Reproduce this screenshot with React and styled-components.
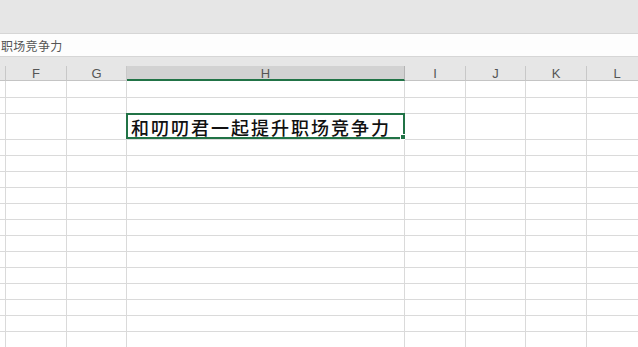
import styled, { createGlobalStyle } from 'styled-components';

const GlobalStyle = createGlobalStyle`
  html, body {
    margin: 0;
    padding: 0;
    background: #ffffff;
  }
`;

const COLS = [
  { name: '', width: 6 },
  { name: 'F', width: 61 },
  { name: 'G', width: 60 },
  { name: 'H', width: 278, active: true },
  { name: 'I', width: 61 },
  { name: 'J', width: 60 },
  { name: 'K', width: 61 },
  { name: 'L', width: 61 },
];

const ROWS = [17, 16, 26, 16, 16, 16, 16, 16, 16, 16, 16, 16, 16, 16, 16, 16];

const template = COLS.map((c) => `${c.width}px`).join(' ');

const Screen = styled.div`
  width: 638px;
  height: 347px;
  overflow: hidden;
  display: flex;
  flex-direction: column;
  background: #ffffff;
  font-family: "Liberation Sans", "Noto Sans CJK SC", sans-serif;
`;

const Ribbon = styled.div`
  height: 33px;
  flex-shrink: 0;
  background: #e6e6e6;
  border-bottom: 1px solid #d6d6d6;
`;

const FormulaBar = styled.div`
  height: 22px;
  flex-shrink: 0;
  display: flex;
  align-items: center;
  background: #fdfdfd;
  border-bottom: 1px solid #d6d6d6;
  font-family: "Noto Sans CJK SC", sans-serif;
  font-size: 12px;
  letter-spacing: 0.3px;
  color: #555555;
  white-space: nowrap;
  padding-left: 1px;
`;

const Gap = styled.div`
  height: 9px;
  flex-shrink: 0;
  background: #e6e6e6;
`;

const Grid = styled.div`
  display: grid;
  grid-template-columns: ${template};
  width: max-content;
`;

const HeaderCell = styled.div`
  height: 15px;
  display: flex;
  align-items: center;
  justify-content: center;
  box-sizing: border-box;
  background: ${(p) => (p.$active ? '#d2d2d2' : '#e6e6e6')};
  border-right: 1px solid ${(p) => (p.$active ? '#b4b4b4' : '#c8c8c8')};
  border-bottom: ${(p) => (p.$active ? '2px solid #217346' : '1px solid #c4c4c4')};
  font-size: 13px;
  color: #555555;
  padding-top: ${(p) => (p.$active ? '1px' : '0')};
`;

const Cell = styled.div`
  position: relative;
  box-sizing: border-box;
  height: ${(p) => p.$h}px;
  border-right: 1px solid #dadada;
  border-bottom: 1px solid #dadada;
  display: flex;
  align-items: center;
  overflow: visible;
`;

const Selection = styled.div`
  position: absolute;
  left: -1px;
  top: -1px;
  right: -1px;
  bottom: 0;
  border: 2px solid #217346;
  box-sizing: border-box;
  pointer-events: none;
  &::after {
    content: '';
    position: absolute;
    right: -3px;
    bottom: -3px;
    width: 4px;
    height: 4px;
    background: #217346;
    border: 1px solid #ffffff;
  }
`;

const CellText = styled.span`
  position: relative;
  z-index: 1;
  padding-left: 4px;
  font-family: "Noto Sans CJK SC", sans-serif;
  font-size: 18px;
  font-weight: 500;
  letter-spacing: 2px;
  color: #111111;
  white-space: nowrap;
`;

const App = () => {
  return (
    <>
      <GlobalStyle />
      <Screen>
        <Ribbon />
        <FormulaBar>职场竞争力</FormulaBar>
        <Gap />
        <Grid>
          {COLS.map((c, i) => (
            <HeaderCell key={`h${i}`} $active={c.active}>
              {c.name}
            </HeaderCell>
          ))}
          {ROWS.map((h, r) =>
            COLS.map((c, i) => {
              const selected = r === 2 && c.name === 'H';
              return (
                <Cell key={`${r}-${i}`} $h={h}>
                  {selected && (
                    <>
                      <Selection />
                      <CellText>和叨叨君一起提升职场竞争力</CellText>
                    </>
                  )}
                </Cell>
              );
            })
          )}
        </Grid>
      </Screen>
    </>
  );
};

export default App;
